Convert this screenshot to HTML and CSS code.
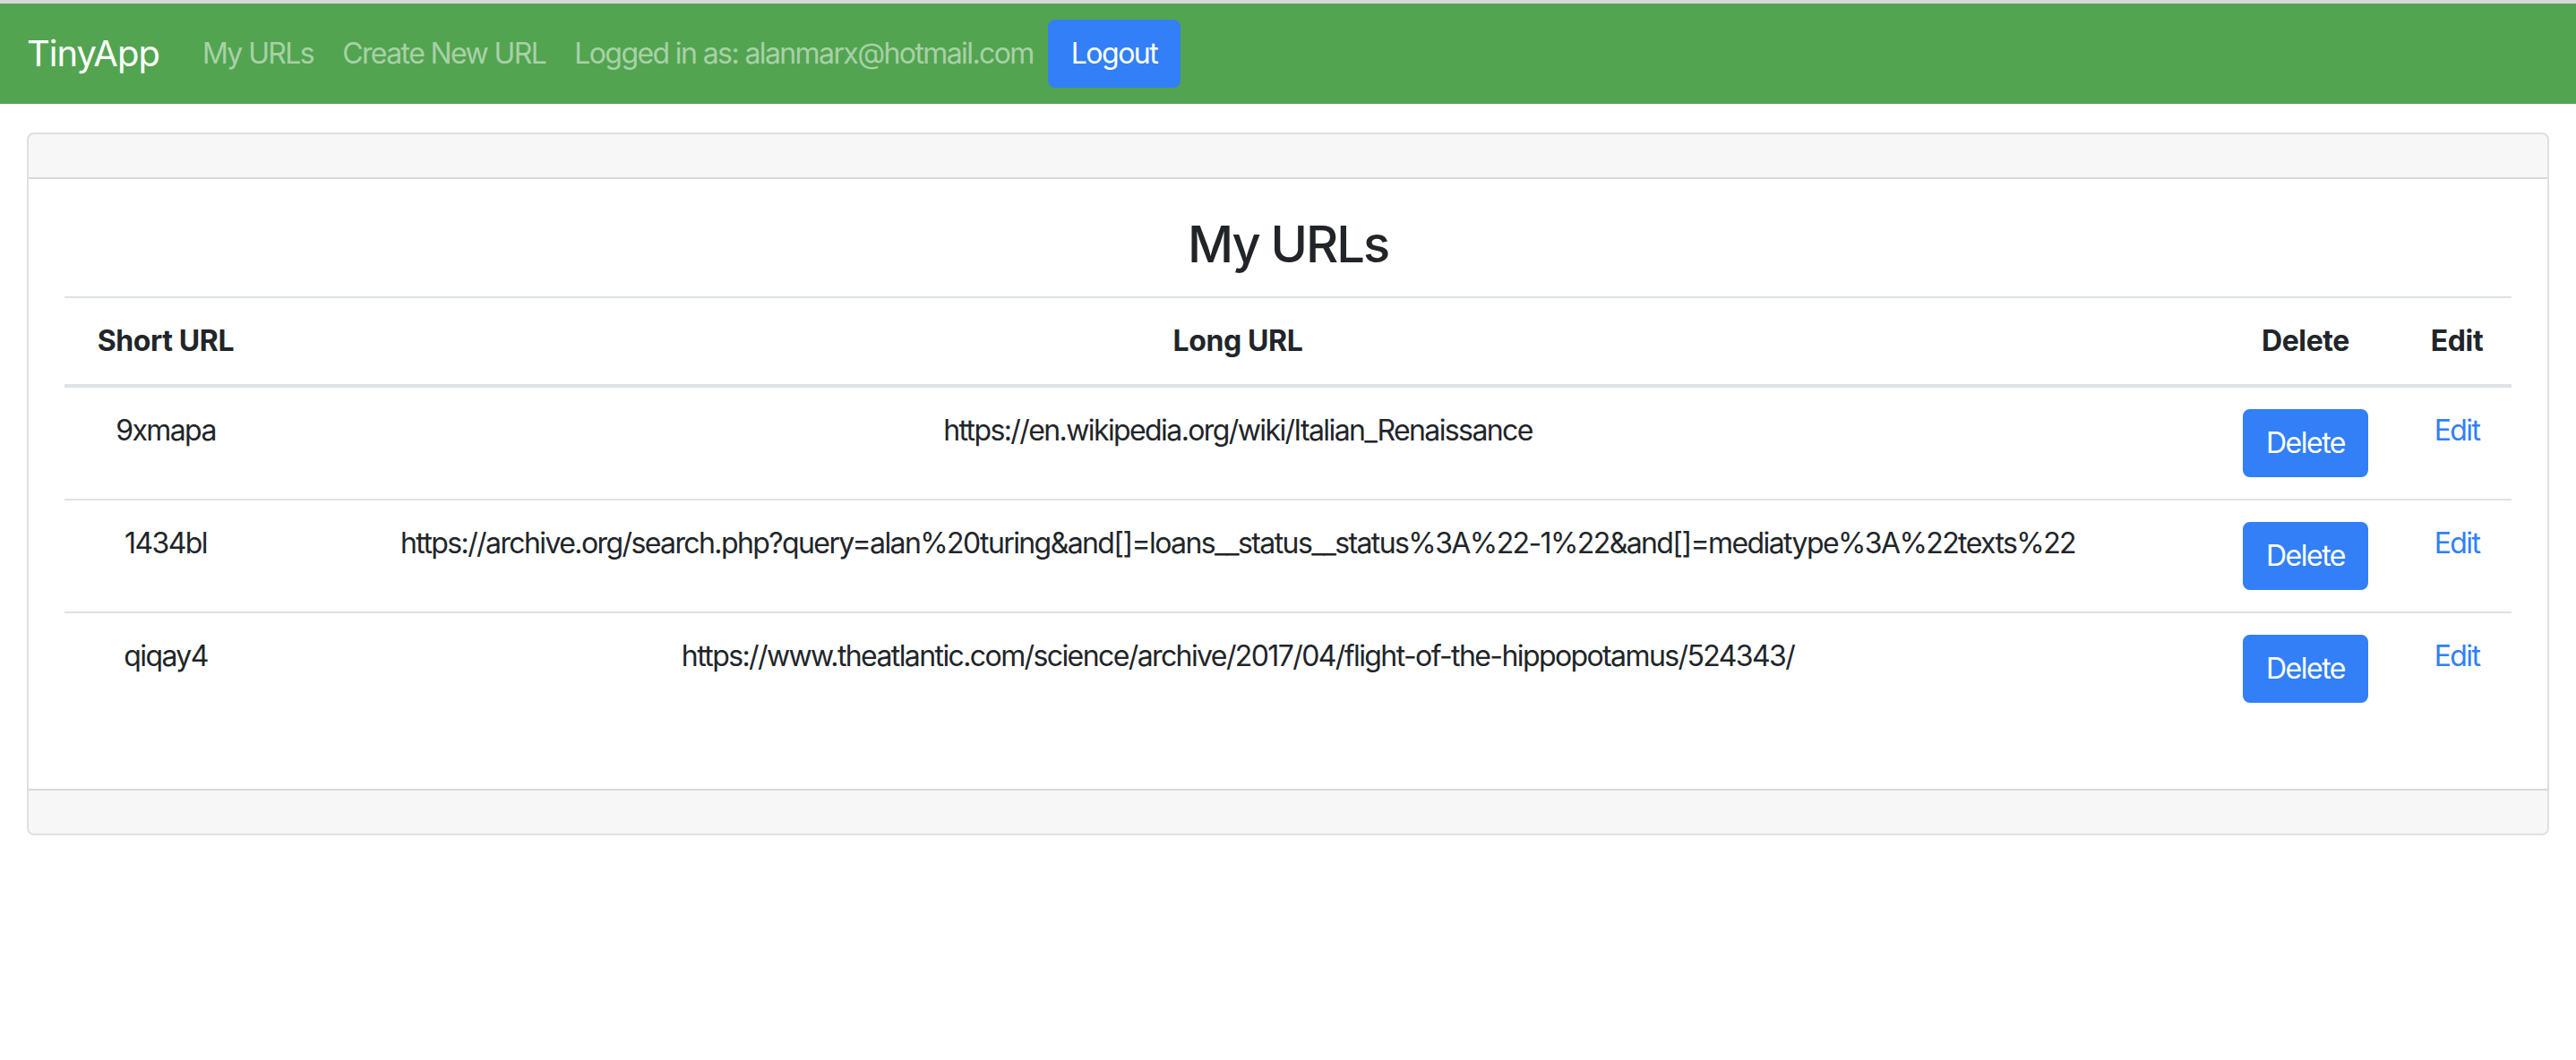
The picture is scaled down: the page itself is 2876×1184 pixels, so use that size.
FILE: index.html
```html
<!DOCTYPE html>
<html lang="en">
<head>
<meta charset="utf-8">
<title>TinyApp</title>
<link rel="stylesheet" href="styles.css">
</head>
<body>
<div class="topstrip"></div>
<nav class="navbar">
  <a class="brand" href="#">TinyApp</a>
  <ul class="nav">
    <li><a class="nav-link" href="#">My URLs</a></li>
    <li><a class="nav-link" href="#">Create New URL</a></li>
    <li><span class="nav-link">Logged in as: alanmarx@hotmail.com</span></li>
    <li><button class="btn btn-primary" type="button">Logout</button></li>
  </ul>
</nav>
<main class="container">
  <div class="card">
    <div class="card-header"></div>
    <div class="card-body">
      <h3 class="title">My URLs</h3>
      <table class="table">
        <colgroup>
          <col class="c-short">
          <col class="c-long">
          <col class="c-del">
          <col class="c-edit">
        </colgroup>
        <thead>
          <tr>
            <th>Short URL</th>
            <th>Long URL</th>
            <th>Delete</th>
            <th>Edit</th>
          </tr>
        </thead>
        <tbody>
          <tr>
            <td>9xmapa</td>
            <td>https://en.wikipedia.org/wiki/Italian_Renaissance</td>
            <td><button class="btn btn-primary" type="button">Delete</button></td>
            <td><a class="link" href="#">Edit</a></td>
          </tr>
          <tr>
            <td>1434bl</td>
            <td>https://archive.org/search.php?query=alan%20turing&amp;and[]=loans__status__status%3A%22-1%22&amp;and[]=mediatype%3A%22texts%22</td>
            <td><button class="btn btn-primary" type="button">Delete</button></td>
            <td><a class="link" href="#">Edit</a></td>
          </tr>
          <tr>
            <td>qiqay4</td>
            <td>https://www.theatlantic.com/science/archive/2017/04/flight-of-the-hippopotamus/524343/</td>
            <td><button class="btn btn-primary" type="button">Delete</button></td>
            <td><a class="link" href="#">Edit</a></td>
          </tr>
        </tbody>
      </table>
    </div>
    <div class="card-footer"></div>
  </div>
</main>
</body>
</html>
```
FILE: styles.css
```css
* { box-sizing: border-box; }

html, body {
  margin: 0;
  padding: 0;
  background: #ffffff;
}

body {
  font-family: Inter, "Noto Sans", "Liberation Sans", sans-serif;
  font-size: 32px;
  line-height: 48px;
  letter-spacing: -1.6px;
  color: #212529;
}

.topstrip {
  height: 4px;
  background: #d6d7d8;
}

.navbar {
  display: flex;
  align-items: center;
  height: 112px;
  padding: 16px 30px;
  background: #52a450;
}

.brand {
  font-size: 40px;
  line-height: 60px;
  letter-spacing: -1px;
  padding: 10px 0;
  margin-right: 32px;
  color: #ffffff;
  text-decoration: none;
}

.nav {
  display: flex;
  align-items: center;
  list-style: none;
  margin: 0;
  padding: 0;
}

.nav-link {
  display: block;
  padding: 16px;
  color: rgba(255, 255, 255, 0.5);
  text-decoration: none;
  font-size: 32px;
  line-height: 48px;
}

.btn {
  display: inline-block;
  font-family: inherit;
  font-size: 32px;
  line-height: 48px;
  letter-spacing: -1.5px;
  padding: 12px 24px;
  border: 2px solid transparent;
  border-radius: 8px;
  font-weight: 400;
  cursor: pointer;
}

.btn-primary {
  background: #327ff7;
  border-color: #327ff7;
  color: #ffffff;
}

.container {
  padding: 32px 30px 0;
}

.card {
  border: 2px solid rgba(0, 0, 0, 0.125);
  border-radius: 8px;
  overflow: hidden;
}

.card-header {
  height: 50px;
  background: rgba(0, 0, 0, 0.03);
  border-bottom: 2px solid rgba(0, 0, 0, 0.125);
}

.card-body {
  padding: 40px;
}

.card-footer {
  height: 50px;
  background: rgba(0, 0, 0, 0.03);
  border-top: 2px solid rgba(0, 0, 0, 0.125);
}

.title {
  margin: 0 0 24px;
  font-size: 56px;
  line-height: 67px;
  letter-spacing: -2px;
  font-weight: 500;
  text-align: center;
}

.table {
  width: 100%;
  table-layout: fixed;
  border-collapse: collapse;
  margin-bottom: 32px;
}

.c-short { width: 226px; }
.c-del { width: 216px; }
.c-edit { width: 122px; }

.table th,
.table td {
  padding: 24px;
  border-top: 2px solid #dee2e6;
  text-align: center;
  vertical-align: top;
}

.table thead th {
  font-weight: 700;
  letter-spacing: -0.4px;
  vertical-align: bottom;
  border-bottom: 4px solid #dee2e6;
}

.link {
  color: #327ff7;
  text-decoration: none;
}
```
